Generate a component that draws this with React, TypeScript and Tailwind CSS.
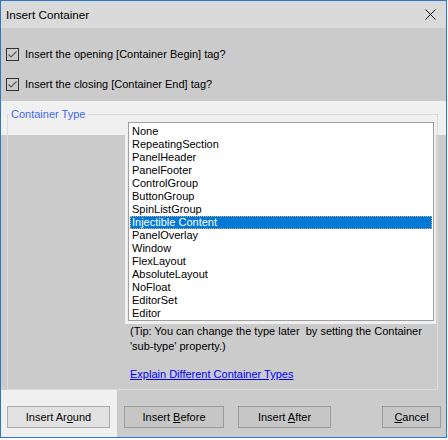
import React from "react";

const items = [
  "None",
  "RepeatingSection",
  "PanelHeader",
  "PanelFooter",
  "ControlGroup",
  "ButtonGroup",
  "SpinListGroup",
  "Injectible Content",
  "PanelOverlay",
  "Window",
  "FlexLayout",
  "AbsoluteLayout",
  "NoFloat",
  "EditorSet",
  "Editor",
];

function Check({ label }: { label: string }) {
  return (
    <div className="flex h-[16px] items-center pl-[5px]">
      <div className="flex h-[13px] w-[13px] items-center justify-center border border-[#333333]">
        <svg width="11" height="11" viewBox="0 0 11 11">
          <path d="M1.5 5.5 L4 8 L9.5 2.5" fill="none" stroke="#5a5a5a" strokeWidth="1.1" />
        </svg>
      </div>
      <span className="ml-[6px]">{label}</span>
    </div>
  );
}

function Btn({ w, children, light }: { w: string; children: React.ReactNode; light?: boolean }) {
  return (
    <div
      className={
        "flex h-[22px] items-center justify-center border " +
        w +
        (light ? " border-[#adadad] bg-[#e1e1e1]" : " border-[#9a9a9a] bg-[#c6c6c6]")
      }
    >
      <span className="whitespace-pre">{children}</span>
    </div>
  );
}

export default function App() {
  return (
    <div className="h-[440px] w-[448px] bg-white font-['Liberation_Sans',sans-serif] text-[11px] leading-[15px] text-black">
      <div className="flex h-[438px] w-[447px] flex-col border border-[#2b79c2]">
        <div className="flex h-[27px] shrink-0 items-center justify-between bg-[#dadada] pl-[5px] pr-[10px]">
          <span className="text-[11.7px]">Insert Container</span>
          <svg width="11" height="11" viewBox="0 0 11 11" className="mb-[1px]">
            <path d="M0.5 0.5 L10.5 10.5 M10.5 0.5 L0.5 10.5" stroke="#000" strokeWidth="1" />
          </svg>
        </div>
        <div className="flex flex-1 flex-col bg-[linear-gradient(to_bottom,#cbcbcb_73px,#f0f0f0_73px,#f0f0f0_107px,#cbcbcb_107px)]">
          <div className="mt-[18px]">
            <Check label="Insert the opening [Container Begin] tag?" />
          </div>
          <div className="mt-[14px]">
            <Check label="Insert the closing [Container End] tag?" />
          </div>
          <fieldset className="ml-[6px] mt-[14px] w-[431px] border border-[#dcdcdc] pb-[7px]">
            <legend className="ml-[1px] px-[2px] leading-[16px] text-[#3d6af5]">Container Type</legend>
            <div className="-mt-[3px] ml-[117px] w-[311px] bg-[#f0f0f0] pb-[3px] pl-[3px] pt-[3px]">
              <div className="w-[306px] border border-[#a0a0a0] bg-white pl-[1px] pr-[1px] pt-[2px] leading-[13px]">
                {items.map((it) =>
                  it === "Injectible Content" ? (
                    <div
                      key={it}
                      className="h-[13px] border border-dotted border-[#e0a868] bg-[#0078d7] pl-[1px] leading-[11px] text-white"
                    >
                      {it}
                    </div>
                  ) : (
                    <div key={it} className="h-[13px] pl-[2px]">
                      {it}
                    </div>
                  )
                )}
              </div>
            </div>
            <div className="ml-[122px] whitespace-pre">
              <div>(Tip: You can change the type later  by setting the Container</div>
              <div>'sub-type' property.)</div>
            </div>
            <div className="ml-[122px] mt-[13px] text-[#0000ff] underline">Explain Different Container Types</div>
          </fieldset>
          <div className="flex flex-1 items-start">
            <div className="h-full w-[116px] bg-[#f0f0f0] pl-[6px] pt-[16px]">
              <Btn w="w-[103px]" light>
                Insert Ar<u>o</u>und
              </Btn>
            </div>
            <div className="ml-[7px] mt-[16px]">
              <Btn w="w-[100px]">
                Insert <u>B</u>efore
              </Btn>
            </div>
            <div className="ml-[14px] mt-[16px]">
              <Btn w="w-[93px]">
                Insert <u>A</u>fter
              </Btn>
            </div>
            <div className="ml-[51px] mt-[16px]">
              <Btn w="w-[59px]">
                <u>C</u>ancel
              </Btn>
            </div>
          </div>
        </div>
      </div>
    </div>
  );
}
